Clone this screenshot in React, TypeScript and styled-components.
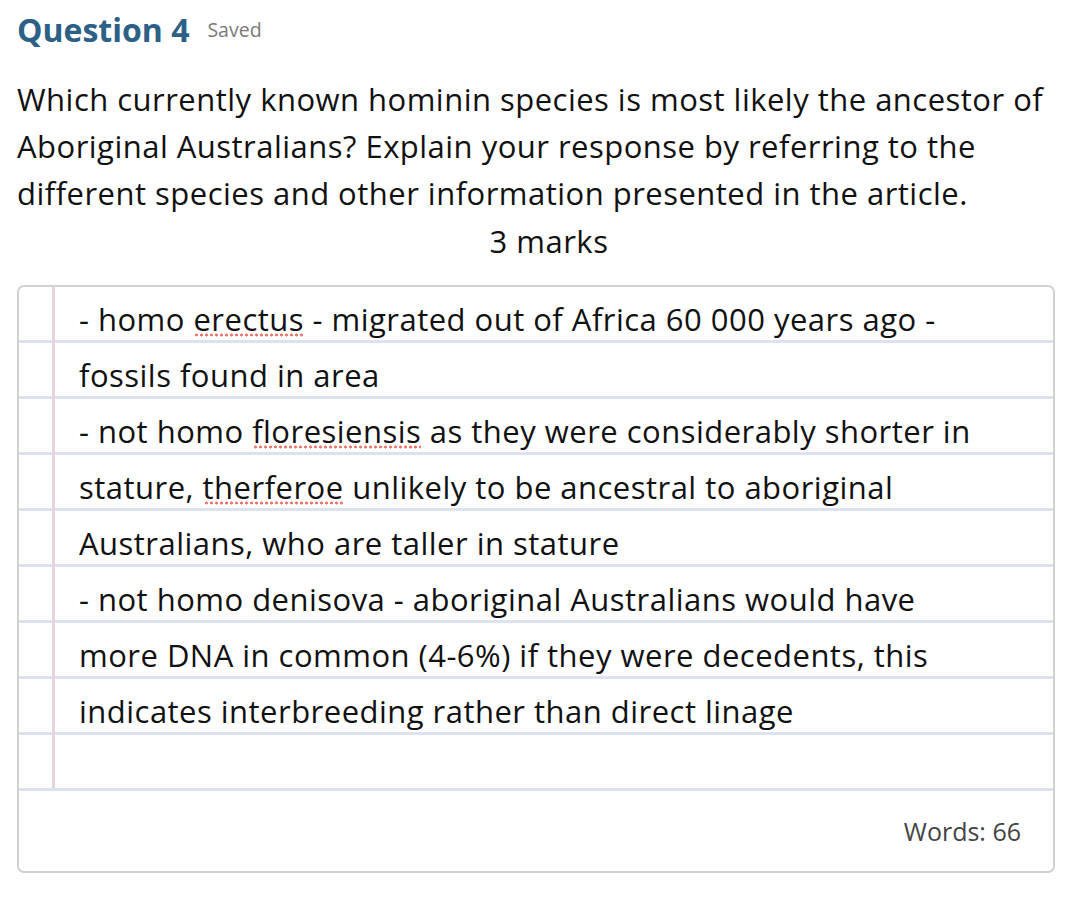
import React from "react"
import styled, { createGlobalStyle } from "styled-components"

const GlobalStyle = createGlobalStyle`
  body {
    margin: 0;
    background: #ffffff;
    font-family: "Open Sans", "Noto Sans", sans-serif;
  }
`

const Page = styled.div`
  padding: 8px 31px 0 17px;
`

const Header = styled.div`
  display: flex;
  align-items: center;
  gap: 18px;
  line-height: 44px;
`

const Title = styled.h1`
  margin: 0;
  font-size: 32px;
  font-weight: 700;
  color: #2c6086;
`

const Status = styled.span`
  font-size: 19.5px;
  color: #7a7a7a;
`

const Prompt = styled.p`
  margin: 24px 0 0;
  font-size: 31px;
  letter-spacing: 0.48px;
  line-height: 47px;
  color: #111;
`

const Marks = styled.div`
  padding: 1px 0 0 26px;
  font-size: 31px;
  letter-spacing: 0.48px;
  line-height: 47px;
  color: #111;
  text-align: center;
`

const Answer = styled.div`
  margin-top: 20px;
  border: 2px solid #d2d2d2;
  border-radius: 7px;
  overflow: hidden;
`

const Sheet = styled.div`
  position: relative;
  padding: 4px 20px 52px 60px;
  font-size: 31px;
  letter-spacing: 0.48px;
  line-height: 56px;
  color: #111;
  background-image: repeating-linear-gradient(
    to bottom,
    transparent 0px,
    transparent 53px,
    #dce2ee 53px,
    #dce2ee 56px
  );

  &::before {
    content: "";
    position: absolute;
    top: 0;
    bottom: 3px;
    left: 33px;
    width: 3px;
    background: #e6d5db;
  }
`

const Typo = styled.span`
  background-image: radial-gradient(circle, #f27a70 1.3px, transparent 1.8px);
  background-size: 5px 4px;
  background-repeat: repeat-x;
  background-position: 1px calc(100% - 3px);
`

const Footer = styled.div`
  display: flex;
  justify-content: flex-end;
  align-items: center;
  height: 80px;
  padding-right: 32px;
  font-size: 25px;
  color: #444;
`

export default function App() {
  return (
    <>
      <GlobalStyle />
      <Page>
        <Header>
          <Title>Question 4</Title>
          <Status>Saved</Status>
        </Header>
        <Prompt>
          Which currently known hominin species is most likely the ancestor of
          <br />
          Aboriginal Australians? Explain your response by referring to the
          <br />
          different species and other information presented in the article.
        </Prompt>
        <Marks>3 marks</Marks>
        <Answer>
          <Sheet>
            - homo <Typo>erectus</Typo> - migrated out of Africa 60 000 years ago -
            <br />
            fossils found in area
            <br />
            - not homo <Typo>floresiensis</Typo> as they were considerably shorter in
            <br />
            stature, <Typo>therferoe</Typo> unlikely to be ancestral to aboriginal
            <br />
            Australians, who are taller in stature
            <br />
            - not homo denisova - aboriginal Australians would have
            <br />
            more DNA in common (4-6%) if they were decedents, this
            <br />
            indicates interbreeding rather than direct linage
          </Sheet>
          <Footer>Words: 66</Footer>
        </Answer>
      </Page>
    </>
  )
}
